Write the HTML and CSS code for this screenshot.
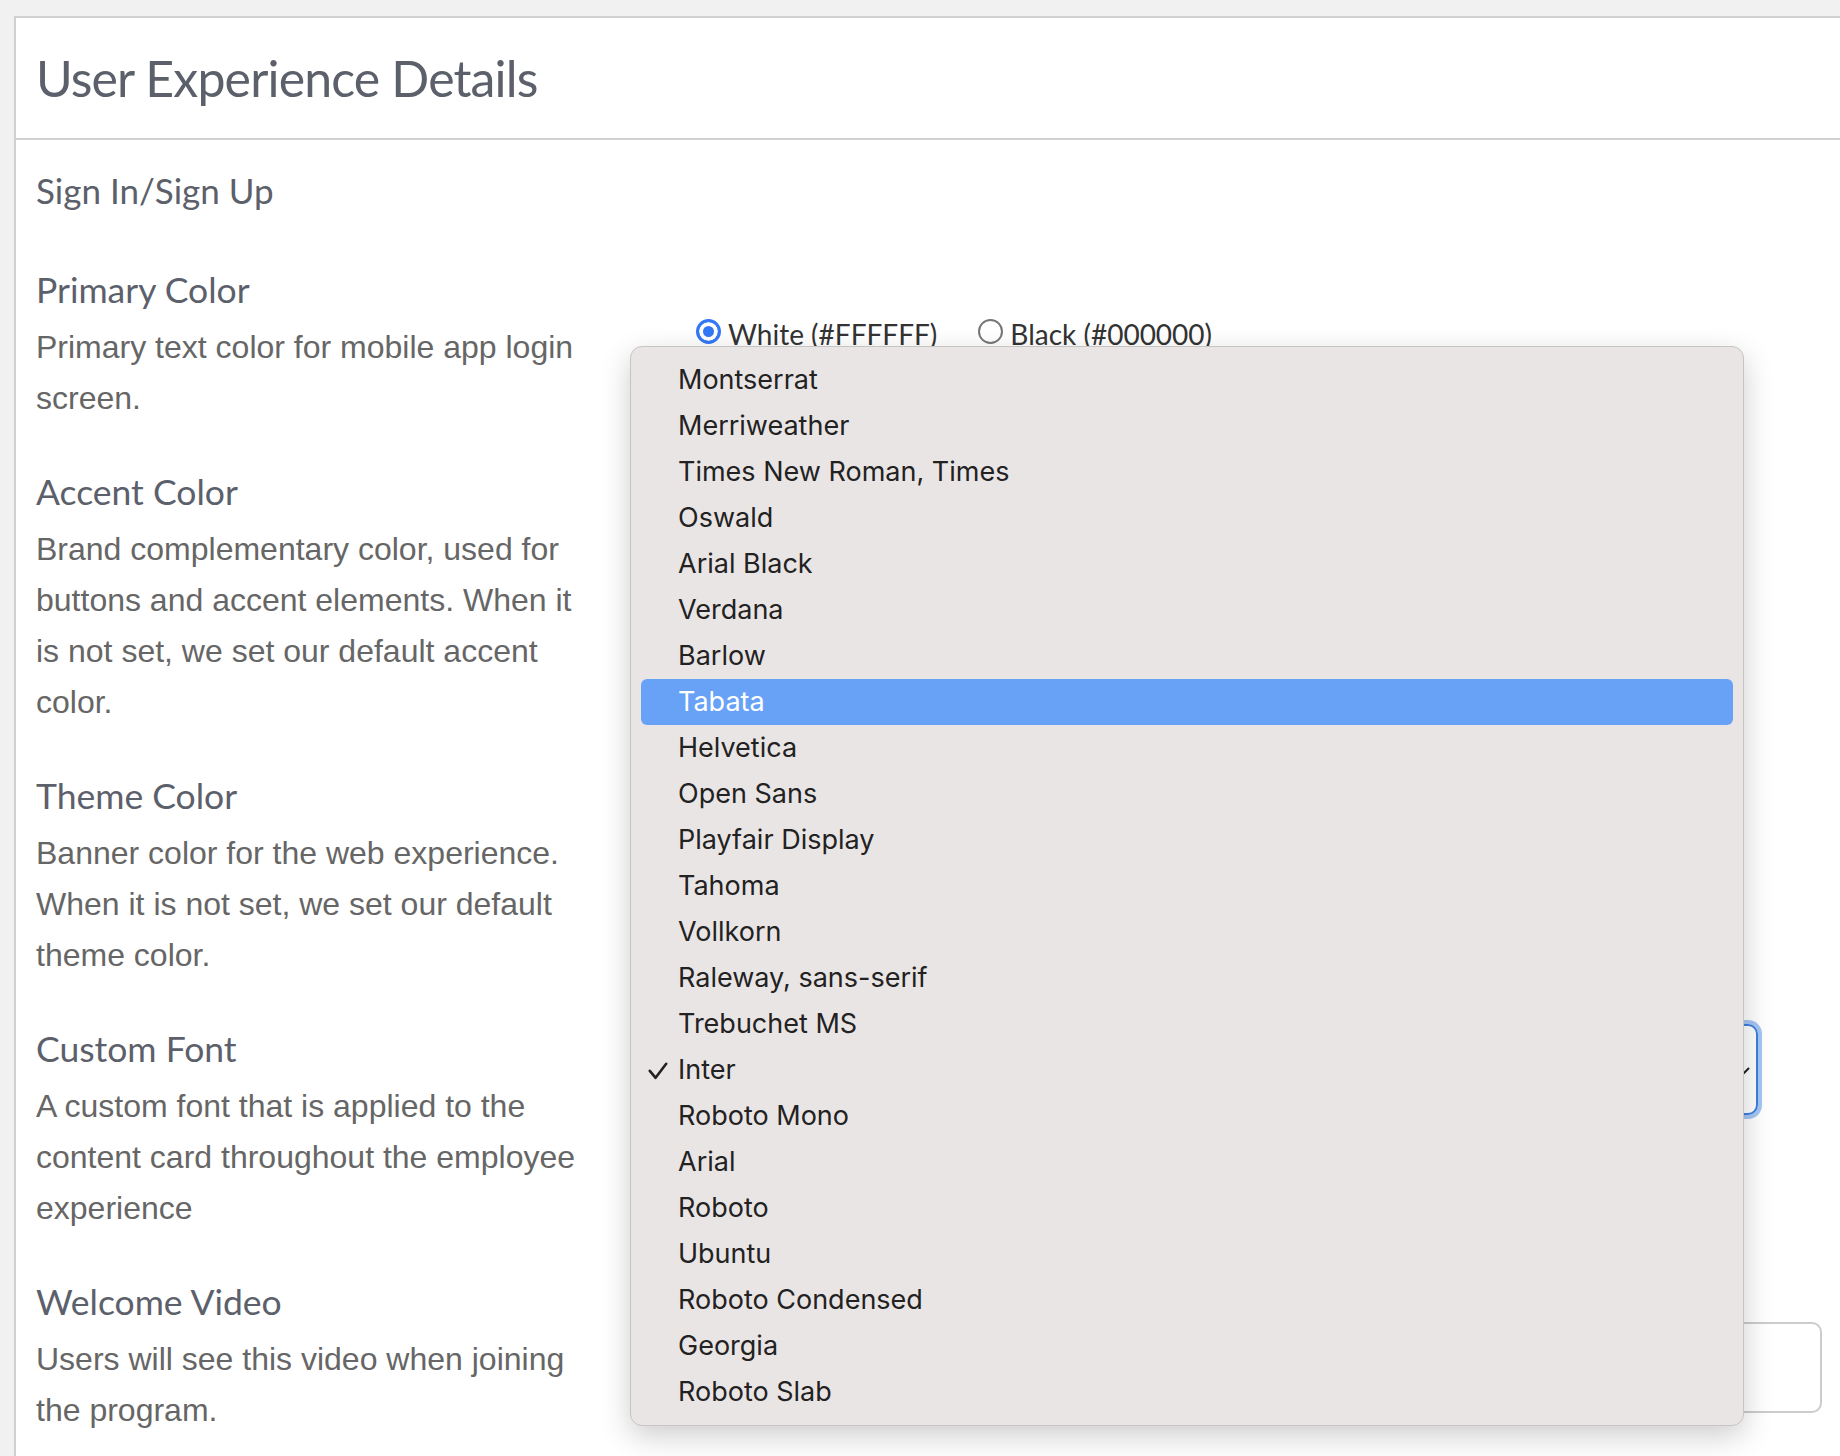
FILE: index.html
```html
<!DOCTYPE html>
<html lang="en">
<head>
    <meta charset="UTF-8">
    <meta name="viewport" content="width=device-width, initial-scale=1.0">
    <title>User Experience Details</title>
    <link rel="stylesheet" href="styles.css">
</head>
<body>
    <div class="page">
        <section class="card">
            <header class="card-header">
                <h1>User Experience Details</h1>
            </header>

            <div class="card-body">
                <h2 class="group-title">Sign In/Sign Up</h2>

                <div class="fields">
                    <div class="field">
                        <div class="field-info">
                            <h3>Primary Color</h3>
                            <p>Primary text color for mobile app login screen.</p>
                        </div>
                        <div class="radios">
                            <label class="radio"><span class="radio-dot checked"></span>White (#FFFFFF)</label>
                            <label class="radio"><span class="radio-dot"></span>Black (#000000)</label>
                        </div>
                    </div>

                    <div class="field">
                        <div class="field-info">
                            <h3>Accent Color</h3>
                            <p>Brand complementary color, used for buttons and accent elements. When it is not set, we set our default accent color.</p>
                        </div>
                        <div class="swatch"></div>
                    </div>

                    <div class="field">
                        <div class="field-info">
                            <h3>Theme Color</h3>
                            <p>Banner color for the web experience. When it is not set, we set our default theme color.</p>
                        </div>
                        <div class="swatch"></div>
                    </div>

                    <div class="field">
                        <div class="field-info">
                            <h3>Custom Font</h3>
                            <p>A custom font that is applied to the content card throughout the employee experience</p>
                        </div>
                        <!-- the open menu covers the select's value -->
                        <div class="font-select">
                            <svg class="chevron" width="16" height="10" viewBox="0 0 16 10">
                                <polyline points="1.5,1.5 8,8 14.5,1.5" fill="none" stroke="#222" stroke-width="2" stroke-linecap="round" stroke-linejoin="round"/>
                            </svg>
                        </div>
                    </div>

                    <div class="field">
                        <div class="field-info">
                            <h3>Welcome Video</h3>
                            <p>Users will see this video when joining the program.</p>
                        </div>
                        <div class="video-input"></div>
                    </div>
                </div>
            </div>
        </section>

        <!-- open font picker popup -->
        <ul class="select-menu">
            <li>Montserrat</li>
            <li>Merriweather</li>
            <li>Times New Roman, Times</li>
            <li>Oswald</li>
            <li>Arial Black</li>
            <li>Verdana</li>
            <li>Barlow</li>
            <li class="active">Tabata</li>
            <li>Helvetica</li>
            <li>Open Sans</li>
            <li>Playfair Display</li>
            <li>Tahoma</li>
            <li>Vollkorn</li>
            <li>Raleway, sans-serif</li>
            <li>Trebuchet MS</li>
            <li class="selected">
                <svg class="check" width="20" height="18" viewBox="0 0 20 18">
                    <polyline points="1.8,8.8 7.6,15.8 18.2,1.8" fill="none" stroke="#222" stroke-width="2.6" stroke-linecap="round" stroke-linejoin="round"/>
                </svg>
                Inter
            </li>
            <li>Roboto Mono</li>
            <li>Arial</li>
            <li>Roboto</li>
            <li>Ubuntu</li>
            <li>Roboto Condensed</li>
            <li>Georgia</li>
            <li>Roboto Slab</li>
        </ul>
    </div>
</body>
</html>
```

FILE: styles.css
```css
html,
body {
    margin: 0;
    height: 100%;
    overflow: hidden;
}

body {
    background-color: #f1f1f1;
    font-family: 'Lato', 'Liberation Sans', sans-serif;
}

.page {
    position: relative;
    padding: 16px 0 0 14px;
}

.card {
    background-color: #fff;
    border: 2px solid #d0d0d0;
    margin-right: -4px;
    min-height: 1500px;
}

.card-header {
    padding: 30px 20px;
    border-bottom: 2px solid #d0d0d0;
}

.card-header h1 {
    margin: 0;
    font-size: 50px;
    line-height: 60px;
    font-weight: 400;
    letter-spacing: -0.85px;
    color: #5c606b;
}

.card-body {
    padding: 30px 20px 0 20px;
}

.group-title {
    margin: 0 0 60px;
    font-size: 35px;
    line-height: 40px;
    font-weight: 400;
    color: #5c606b;
}

.fields {
    display: flex;
    flex-direction: column;
    gap: 48px;
}

.field {
    display: grid;
    grid-template-columns: 552px 1fr;
    column-gap: 108px;
    align-items: start;
}

.field-info h3 {
    margin: 0 0 12px;
    font-size: 35.5px;
    line-height: 40px;
    font-weight: 400;
    color: #5c606b;
}

.field-info p {
    margin: 0;
    font-family: 'Liberation Sans', Arial, sans-serif;
    font-size: 32px;
    line-height: 51px;
    color: #666;
}

.radios {
    display: flex;
    align-items: flex-start;
    gap: 41px;
    margin-top: 47px;
    font-size: 28px;
    line-height: 34px;
    color: #333;
}

.radio {
    display: flex;
    align-items: flex-start;
    gap: 7px;
}

.radio-dot {
    width: 25px;
    height: 25px;
    margin-top: 2px;
    box-sizing: border-box;
    border: 2px solid #777;
    border-radius: 50%;
    background-color: #fff;
}

.radio-dot.checked {
    border: 3px solid #3478f6;
    background-color: #3478f6;
    box-shadow: inset 0 0 0 4px #fff;
}

.swatch {
    width: 60px;
    height: 40px;
    margin-top: 44px;
    border: 2px solid #ccc;
    border-radius: 6px;
}

.font-select {
    display: flex;
    align-items: center;
    justify-content: flex-end;
    height: 91px;
    margin-top: -5px;
    margin-right: 64px;
    padding: 0 6px 0 24px;
    box-sizing: border-box;
    border: 2px solid #3d7fe0;
    border-radius: 10px;
    box-shadow: 0 0 0 4px #a5c6f5;
}

.font-select .chevron {
    margin-top: 4px;
}

.video-input {
    height: 91px;
    margin-top: 40px;
    box-sizing: border-box;
    border: 2px solid #ccc;
    border-radius: 10px;
}

.select-menu {
    position: absolute;
    left: 630px;
    top: 346px;
    width: 1114px;
    box-sizing: border-box;
    margin: 0;
    padding: 10px;
    list-style: none;
    background-color: #eae5e5;
    border: 1px solid #c8c4c4;
    border-radius: 12px;
    box-shadow: 0 10px 30px rgba(0, 0, 0, 0.2);
    font-family: 'Inter', sans-serif;
    font-size: 27px;
    color: #222;
}

.select-menu li {
    position: relative;
    height: 46px;
    line-height: 46px;
    padding-left: 37px;
    border-radius: 6px;
    white-space: nowrap;
}

.select-menu li.active {
    background-color: #68a2f7;
    color: #fff;
}

.select-menu .check {
    position: absolute;
    left: 7px;
    top: 15px;
}
```
